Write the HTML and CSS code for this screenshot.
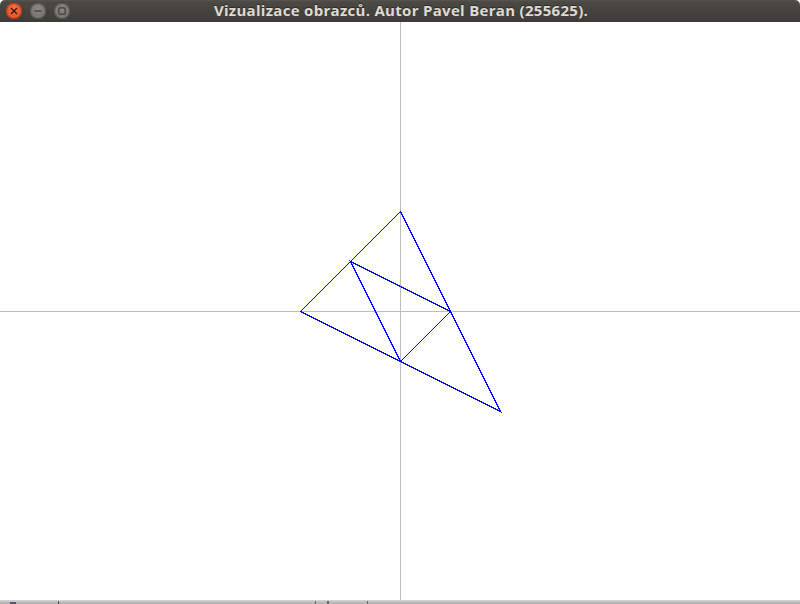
FILE: index.html
```html
<!DOCTYPE html>
<html>
<head>
<meta charset="utf-8">
<link rel="stylesheet" href="styles.css">
</head>
<body>
<div class="window">
  <div class="titlebar">
    <div class="controls">
      <span class="btn close"><svg width="8" height="8" viewBox="0 0 8 8"><path d="M1 1L7 7M7 1L1 7" stroke="#3a1a0e" stroke-width="1.4"/></svg></span>
      <span class="btn gray"><svg width="8" height="8" viewBox="0 0 8 8"><path d="M0.5 4H7.5" stroke="#3c3b37" stroke-width="1.2"/></svg></span>
      <span class="btn gray"><svg width="8" height="8" viewBox="0 0 8 8"><rect x="0.8" y="0.8" width="6.4" height="6.4" rx="1" fill="none" stroke="#3c3b37" stroke-width="1.2"/></svg></span>
    </div>
    <div class="title">Vizualizace obrazců. Autor Pavel Beran (255625).</div>
  </div>
  <svg class="canvas" width="800" height="578" viewBox="0 0 800 578" shape-rendering="crispEdges">
    <line x1="400.5" y1="0" x2="400.5" y2="578" stroke="#bdbdbd"/>
    <line x1="0" y1="289.5" x2="800" y2="289.5" stroke="#bdbdbd"/>
    <g stroke="#0000ff" stroke-width="1" fill="none">
      <polygon points="400.5,189.5 300.5,289.5 500.5,389.5"/>
      <polygon points="350.5,239.5 450.5,289.5 400.5,339.5"/>
    </g>
  </svg>
  <div class="bottom">
    <span class="mark m1"></span>
    <span class="mark m2"></span>
    <span class="mark m3"></span>
    <span class="mark m4"></span>
    <span class="mark m5"></span>
  </div>
</div>
</body>
</html>
```
FILE: styles.css
```css
html, body {
  margin: 0;
  padding: 0;
  background: #ffffff;
  overflow: hidden;
}
.window {
  width: 800px;
  height: 604px;
  display: flex;
  flex-direction: column;
  background: #ffffff;
}
.titlebar {
  height: 22px;
  flex: none;
  position: relative;
  background: linear-gradient(#56544e 0px, #4a4944 2px, #3c3b37 22px);
  border-radius: 5px 5px 0 0;
  display: flex;
  align-items: center;
}
.controls {
  display: flex;
  gap: 8px;
  padding-left: 6px;
  align-items: center;
}
.btn {
  width: 16px;
  height: 16px;
  border-radius: 50%;
  display: flex;
  align-items: center;
  justify-content: center;
}
.close {
  background: radial-gradient(circle at 50% 35%, #f27049, #df4a1d);
  box-shadow: inset 0 0 0 1px #b03a14;
}
.gray {
  background: radial-gradient(circle at 50% 35%, #8a8883, #6e6c67);
  box-shadow: inset 0 0 0 1px #55534f;
}
.title {
  position: absolute;
  left: 0;
  right: 0;
  top: 0;
  height: 22px;
  line-height: 21px;
  text-align: center;
  padding-left: 2px;
  font-family: "Open Sans", "DejaVu Sans", sans-serif;
  font-weight: 700;
  font-size: 15px;
  letter-spacing: 0.3px;
  color: #dfdbd2;
  text-shadow: 0 -1px 0 #2a2925;
}
.canvas {
  display: block;
  flex: none;
}
.bottom {
  flex: 1;
  position: relative;
  background: linear-gradient(#d8d8d8, #a8a8a8);
}
.mark {
  position: absolute;
  top: 1px;
  bottom: 0;
  width: 1px;
  background: #6a6a6a;
}
.m1 { left: 10px; width: 6px; background: #555a70; top: 2px; }
.m2 { left: 58px; background: #6a3a70; }
.m3 { left: 315px; }
.m4 { left: 327px; width: 2px; }
.m5 { left: 367px; }
```
